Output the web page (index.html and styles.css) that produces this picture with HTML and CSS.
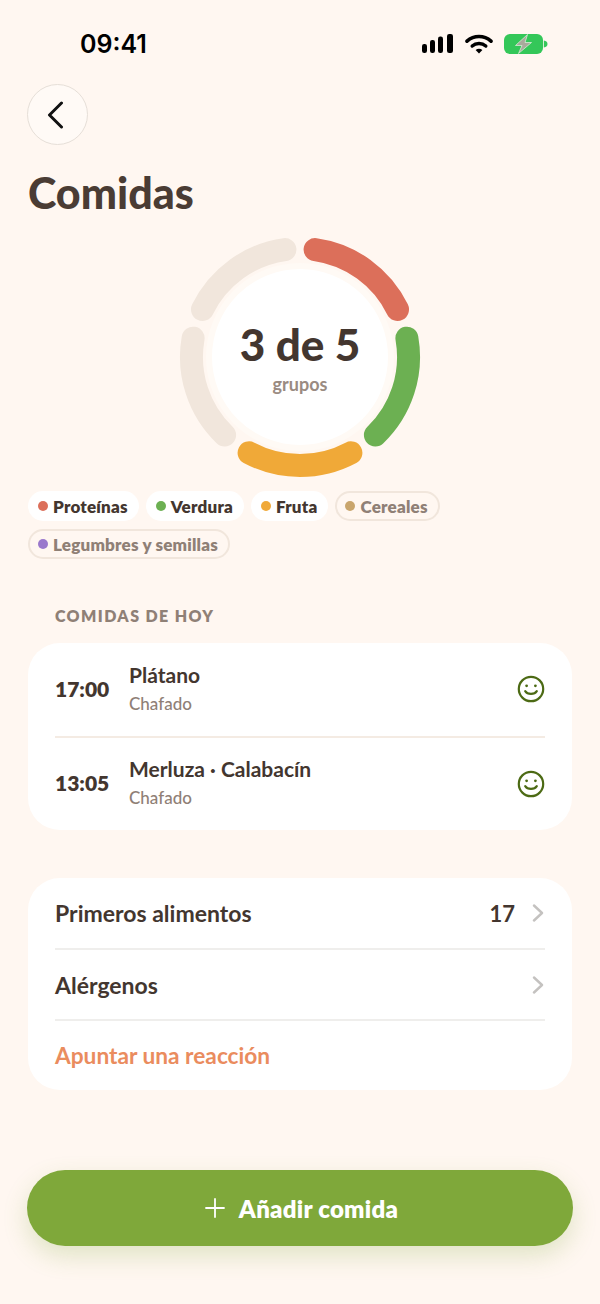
FILE: index.html
```html
<!DOCTYPE html>
<html lang="es">
<head>
    <meta charset="UTF-8">
    <meta name="viewport" content="width=device-width, initial-scale=1.0">
    <title>Comidas</title>
    <link rel="stylesheet" href="styles.css">
</head>
<body>
    <div id="maincont">
        <div class="statusbar">
            <span class="clock">09:41</span>
            <div class="statusicons">
                <svg width="32" height="20" viewBox="0 0 32 20"><rect x="0" y="10" width="5" height="9" rx="2.2"/><rect x="8" y="6" width="5" height="13" rx="2.2"/><rect x="16" y="2.5" width="5" height="16.5" rx="2.2"/><rect x="25" y="0" width="6" height="19" rx="2.2"/></svg>
                <svg width="28" height="20" viewBox="0 0 28 20"><path d="M2 7.2 C9 1 19 1 26 7.2" fill="none" stroke="#000" stroke-width="3.6" stroke-linecap="round"/><path d="M7.2 12 C11 8.6 17 8.6 20.8 12" fill="none" stroke="#000" stroke-width="3.4" stroke-linecap="round"/><path d="M10.6 16 C12.6 14.4 15.4 14.4 17.4 16 L14 19.6 Z"/></svg>
                <svg width="44" height="20" viewBox="0 0 44 20"><rect x="0" y="0" width="39" height="20" rx="6" fill="#34c759"/><path d="M39.8 6.5 C42.5 7 43.5 8.4 43.5 10 C43.5 11.6 42.5 13 39.8 13.5 Z" fill="#34c759"/><path d="M23.5 0.5 L11.5 11.5 L18 11.5 L14.5 19.5 L27.5 8.5 L21 8.5 Z" fill="#a9aa9c" stroke="#d5eed6" stroke-width="0.8"/></svg>
            </div>
        </div>

        <button class="backbtn">
            <svg width="20" height="28" viewBox="0 0 20 28"><path d="M15.5 2 L3.5 14 L15.5 26" fill="none" stroke="#111" stroke-width="3" stroke-linecap="round" stroke-linejoin="round"/></svg>
        </button>

        <h1 class="pagetitle">Comidas</h1>

        <div class="ringwrap">
            <svg class="ring" width="244" height="244" viewBox="0 0 244 244">
                <circle cx="122" cy="122" r="91" fill="#fff" stroke="#fffaf5" stroke-width="6"/>
                <g fill="none" stroke-width="23" stroke-linecap="round">
                    <path d="M137.1 14.6 A108.5 108.5 0 0 1 219.5 74.4" stroke="#dc6f5a"/>
                    <path d="M228.9 103.2 A108.5 108.5 0 0 1 197.4 200" stroke="#6cb052"/>
                    <path d="M172.9 217.8 A108.5 108.5 0 0 1 71.1 217.8" stroke="#f0a938"/>
                    <path d="M46.6 200 A108.5 108.5 0 0 1 15.1 103.2" stroke="#f1e6dc"/>
                    <path d="M24.5 74.4 A108.5 108.5 0 0 1 106.9 14.6" stroke="#f1e6dc"/>
                </g>
            </svg>
            <div class="ringlabel">
                <div class="ringcount">3 de 5</div>
                <div class="ringsub">grupos</div>
            </div>
        </div>

        <div class="chips">
            <span class="chip"><i class="dot red"></i>Proteínas</span>
            <span class="chip"><i class="dot green"></i>Verdura</span>
            <span class="chip"><i class="dot orange"></i>Fruta</span>
            <span class="chip off"><i class="dot tan"></i>Cereales</span>
            <span class="chip off"><i class="dot purple"></i>Legumbres y semillas</span>
        </div>

        <p class="sectionlabel">COMIDAS DE HOY</p>

        <div class="card meals">
            <div class="meal">
                <span class="mealtime">17:00</span>
                <div class="mealinfo">
                    <span class="mealname">Plátano</span>
                    <span class="mealnote">Chafado</span>
                </div>
                <svg class="smile" width="28" height="28" viewBox="0 0 28 28"><circle cx="14" cy="14" r="12.2" fill="none" stroke="#4c6a14" stroke-width="2.2"/><circle cx="9.6" cy="10.8" r="1.4" fill="#4c6a14"/><circle cx="18.4" cy="10.8" r="1.4" fill="#4c6a14"/><path d="M8.2 16.2 C10.5 19.8 17.5 19.8 19.8 16.2" fill="none" stroke="#4c6a14" stroke-width="2.2" stroke-linecap="round"/></svg>
            </div>
            <div class="meal">
                <span class="mealtime">13:05</span>
                <div class="mealinfo">
                    <span class="mealname">Merluza · Calabacín</span>
                    <span class="mealnote">Chafado</span>
                </div>
                <svg class="smile" width="28" height="28" viewBox="0 0 28 28"><circle cx="14" cy="14" r="12.2" fill="none" stroke="#4c6a14" stroke-width="2.2"/><circle cx="9.6" cy="10.8" r="1.4" fill="#4c6a14"/><circle cx="18.4" cy="10.8" r="1.4" fill="#4c6a14"/><path d="M8.2 16.2 C10.5 19.8 17.5 19.8 19.8 16.2" fill="none" stroke="#4c6a14" stroke-width="2.2" stroke-linecap="round"/></svg>
            </div>
        </div>

        <div class="card links">
            <div class="linkrow">
                <span class="linktext">Primeros alimentos</span>
                <span class="linkcount">17</span>
                <svg class="chev" width="12" height="18" viewBox="0 0 12 18"><path d="M2 1.5 L10 9 L2 16.5" fill="none" stroke="#c4c2c0" stroke-width="2.4" stroke-linecap="round" stroke-linejoin="round"/></svg>
            </div>
            <div class="linkrow">
                <span class="linktext">Alérgenos</span>
                <svg class="chev" width="12" height="18" viewBox="0 0 12 18"><path d="M2 1.5 L10 9 L2 16.5" fill="none" stroke="#c4c2c0" stroke-width="2.4" stroke-linecap="round" stroke-linejoin="round"/></svg>
            </div>
            <div class="linkrow">
                <span class="linktext accent">Apuntar una reacción</span>
            </div>
        </div>

        <button class="addbtn">
            <svg width="20" height="20" viewBox="0 0 20 20"><path d="M10 1 V19 M1 10 H19" stroke="#fff" stroke-width="1.8" stroke-linecap="round"/></svg>
            Añadir comida
        </button>
    </div>
</body>
</html>
```

FILE: styles.css
```css
*{
    font-family: 'Lato', 'Noto Sans', sans-serif;
    box-sizing: border-box;
}

body{
    margin: 0;
    background-color: #fff7f1;
}

#maincont{
    width: 600px;
    height: 1304px;
    padding: 0 27px;
    overflow: hidden;
}

.statusbar{
    display: flex;
    justify-content: space-between;
    align-items: center;
    height: 34px;
    margin-top: 27px;
    padding: 0 25px 0 53px;
}

.clock{
    font-family: 'Inter', sans-serif;
    font-size: 25px;
    font-weight: 600;
    color: #000;
}

.statusicons{
    display: flex;
    align-items: center;
    gap: 11px;
}

.backbtn{
    display: flex;
    align-items: center;
    justify-content: center;
    width: 61px;
    height: 61px;
    margin-top: 23px;
    padding: 0 4px 0 0;
    border: 1px solid #e6dfd8;
    border-radius: 50%;
    background-color: #fffaf6;
}

.pagetitle{
    margin: 26px 0 0 1px;
    font-size: 43px;
    line-height: 44px;
    font-weight: 900;
    color: #4a3c34;
}

.ringwrap{
    display: grid;
    justify-content: center;
    align-items: center;
    margin-top: 20px;
}

.ring, .ringlabel{
    grid-area: 1 / 1;
}

.ringlabel{
    text-align: center;
}

.ringcount{
    font-size: 44px;
    line-height: 50px;
    font-weight: 900;
    color: #43362f;
}

.ringsub{
    margin-top: 4px;
    font-size: 18px;
    line-height: 22px;
    font-weight: 700;
    color: #9a8b82;
}

.chips{
    display: flex;
    flex-wrap: wrap;
    gap: 8px 7px;
    margin: 12px 0 0 1px;
    width: 500px;
}

.chip{
    display: flex;
    align-items: center;
    gap: 5px;
    height: 30px;
    padding: 0 11px 0 10px;
    border-radius: 15px;
    background-color: #fff;
    font-size: 17px;
    letter-spacing: 0.2px;
    font-weight: 800;
    color: #43362f;
}

.chip.off{
    background-color: transparent;
    border: 2px solid #f1e6dc;
    padding: 0 10px 0 8px;
    color: #8f8076;
}

.dot{
    width: 10px;
    height: 10px;
    border-radius: 50%;
}
.red{ background-color: #dc6f5a; }
.green{ background-color: #6cb052; }
.orange{ background-color: #f0a938; }
.tan{ background-color: #c9a56c; }
.purple{ background-color: #9a78cc; }

.sectionlabel{
    margin: 47px 0 0 28px;
    font-size: 16px;
    line-height: 20px;
    font-weight: 800;
    letter-spacing: 1.4px;
    color: #8f8076;
}

.card{
    width: 544px;
    margin-left: 1px;
    padding: 0 27px;
    border-radius: 32px;
    background-color: #fff;
}

.meals{
    margin-top: 17px;
}

.meal{
    display: flex;
    align-items: center;
    height: 92.5px;
}

.meal + .meal{
    height: 94.5px;
    border-top: 2px solid #f4ebe3;
}

.mealtime{
    width: 74px;
    padding-bottom: 2px;
    font-size: 21px;
    font-weight: 800;
    color: #43362f;
}

.mealinfo{
    display: flex;
    flex-direction: column;
    flex: 1;
    gap: 6px;
    padding-bottom: 3px;
}

.mealname{
    font-size: 21px;
    line-height: 26px;
    font-weight: 700;
    color: #43362f;
}

.mealnote{
    font-size: 17px;
    line-height: 20px;
    font-weight: 500;
    color: #8f8076;
}

.links{
    margin-top: 48px;
}

.linkrow{
    display: flex;
    align-items: center;
    height: 71px;
}

.linkrow:first-child{
    height: 70px;
}

.linkrow + .linkrow{
    border-top: 2px solid #efeeec;
}

.linktext{
    flex: 1;
    font-size: 23px;
    font-weight: 700;
    color: #43362f;
}

.linktext.accent{
    font-size: 22.7px;
    color: #ea8c5e;
}

.linkcount{
    margin-right: 17px;
    font-size: 22px;
    font-weight: 700;
    color: #43362f;
}

.chev{
    margin-right: 1px;
}

.addbtn{
    display: flex;
    align-items: center;
    justify-content: center;
    gap: 14px;
    width: 546px;
    height: 76px;
    margin-top: 80px;
    padding: 0 0 0 3px;
    border: none;
    border-radius: 38px;
    background-color: #7fa83a;
    box-shadow: 0 10px 24px rgba(127, 168, 58, 0.24);
    font-size: 24px;
    letter-spacing: 0.25px;
    font-weight: 800;
    color: #fff;
}
```
